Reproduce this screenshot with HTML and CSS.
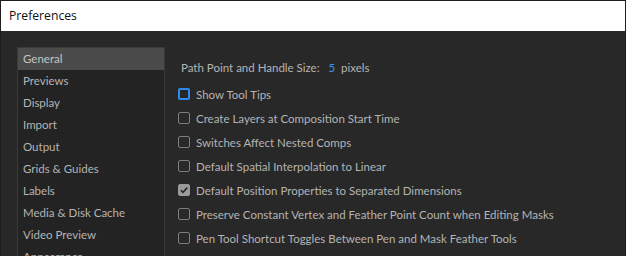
FILE: index.html
```html
<!DOCTYPE html>
<html lang="en">
<head>
  <meta charset="UTF-8" />
  <title>Preferences</title>
  <link rel="stylesheet" href="styles.css">
</head>
<body>

<div id="window">
  <div id="title-bar">Preferences</div>

  <div id="content">
    <ul id="categories">
      <li class="selected">General</li>
      <li>Previews</li>
      <li>Display</li>
      <li>Import</li>
      <li>Output</li>
      <li>Grids &amp; Guides</li>
      <li>Labels</li>
      <li>Media &amp; Disk Cache</li>
      <li>Video Preview</li>
      <li>Appearance</li>
    </ul>

    <div id="settings">
      <div id="handle-size">
        Path Point and Handle Size:
        <span class="value">5</span>
        pixels
      </div>

      <div class="option"><span class="box focused"></span>Show Tool Tips</div>
      <div class="option"><span class="box"></span>Create Layers at Composition Start Time</div>
      <div class="option"><span class="box"></span>Switches Affect Nested Comps</div>
      <div class="option"><span class="box"></span>Default Spatial Interpolation to Linear</div>
      <div class="option">
        <span class="box checked">
          <svg width="10" height="10" viewBox="0 0 10 10"><path d="M1.8 5.2 L4 7.4 L8.3 2.6" fill="none" stroke="#262626" stroke-width="1.6"/></svg>
        </span>Default Position Properties to Separated Dimensions
      </div>
      <div class="option"><span class="box"></span>Preserve Constant Vertex and Feather Point Count when Editing Masks</div>
      <div class="option"><span class="box"></span>Pen Tool Shortcut Toggles Between Pen and Mask Feather Tools</div>
    </div>
  </div>
</div>

</body>
</html>
```

FILE: styles.css
```css
body {
  margin: 0;
  background: #1e1e1e;
  font-family: Lato, "Open Sans", sans-serif;
  font-size: 11.5px;
  overflow: hidden;
}

#window {
  height: 256px;
  overflow: hidden;
  border: 1px solid #1e1e1e;
  border-bottom: none;
  box-sizing: border-box;
  background: #282828;
}

#title-bar {
  height: 30px;
  line-height: 30px;
  padding-left: 8px;
  background: white;
  color: #111;
  font-family: "Open Sans", sans-serif;
  font-size: 12.2px;
}

#content {
  display: flex;
  padding: 16px 0 0 16px;
}

#categories {
  list-style: none;
  margin: 0;
  padding: 0;
  width: 146px;
  height: 240px;
  border: 1px solid #3a3a3a;
  background: #232323;
  flex-shrink: 0;
}

#categories li {
  height: 22px;
  line-height: 21px;
  padding-left: 5px;
  color: #b4b4b4;
}

#categories li.selected {
  background: #4b4b4b;
  color: #c4c4c4;
}

#settings {
  padding: 12px 0 0 13px;
  color: #b4b4b4;
}

#handle-size {
  height: 18px;
  line-height: 18px;
  padding-left: 3px;
  margin-bottom: 5px;
}

#handle-size .value {
  color: #3d94f0;
  margin: 0 3px 0 6px;
}

.option {
  display: flex;
  align-items: center;
  height: 24px;
}

.box {
  width: 12px;
  height: 12px;
  border: 1.5px solid #7c7c7c;
  border-radius: 2px;
  box-sizing: border-box;
  margin-right: 6px;
  display: flex;
  justify-content: center;
  align-items: center;
}

.box.focused {
  border: 2px solid #2d8ceb;
}

.box.checked {
  background: #9a9a9a;
  border-color: #9a9a9a;
}
```
